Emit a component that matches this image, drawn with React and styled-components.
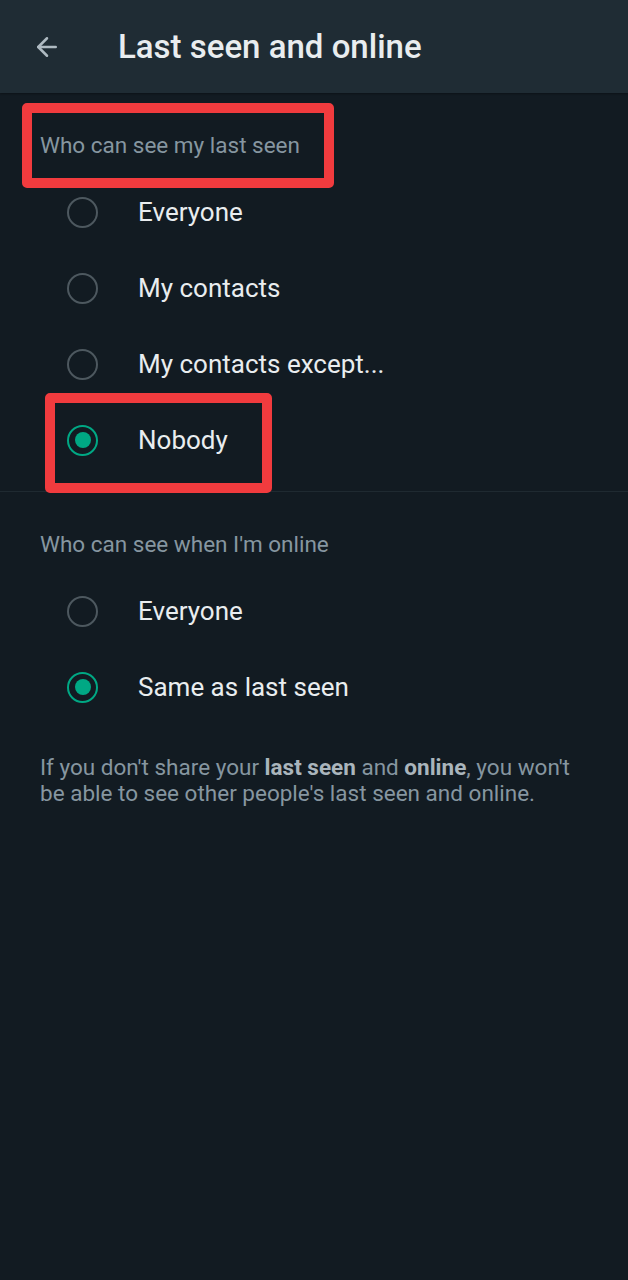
import React from 'react'
import styled, { createGlobalStyle } from 'styled-components'
import { ArrowLeft } from 'lucide-react'

const GlobalStyle = createGlobalStyle`
  html, body {
    margin: 0;
    padding: 0;
    background: #121b22;
  }
  * { box-sizing: border-box; }
`

const Page = styled.div`
  position: relative;
  width: 628px;
  min-height: 1280px;
  background: #121b22;
  font-family: Roboto, "Noto Sans", sans-serif;
  color: #e9edef;
`

const TopBar = styled.header`
  height: 93px;
  display: flex;
  align-items: center;
  padding-left: 32px;
  gap: 56px;
  background: #1f2c34;
  box-shadow: 0 1px 2px rgba(0, 0, 0, 0.35);

  h1 {
    margin: 0;
    font-size: 33px;
    font-weight: 500;
    color: #e9edef;
  }
`

const SectionLabel = styled.div`
  padding: 39px 40px 16px;
  font-size: 22.5px;
  line-height: 26px;
  color: #8696a0;
`

const Row = styled.div`
  height: 76px;
  display: flex;
  align-items: center;
  padding-left: 67px;
  gap: 40px;
  font-size: 26px;
  color: #e9edef;
`

const Radio = styled.span`
  width: 31px;
  height: 31px;
  border-radius: 50%;
  border: 2.5px solid ${p => (p.$on ? '#00a884' : '#4d585f')};
  display: flex;
  align-items: center;
  justify-content: center;

  &::after {
    content: '';
    width: 16px;
    height: 16px;
    border-radius: 50%;
    background: #00a884;
    display: ${p => (p.$on ? 'block' : 'none')};
  }
`

const Divider = styled.hr`
  margin: 13px 0 0;
  border: 0;
  border-top: 1px solid #1f2a31;
`

const Note = styled.p`
  margin: 0;
  padding: 29px 40px 0;
  font-size: 22.5px;
  line-height: 26px;
  color: #8696a0;

  b {
    font-weight: 700;
    color: #aab5bc;
  }
`

const Mark = styled.div`
  position: absolute;
  border: 10px solid #f13b3e;
  border-radius: 5px;
  pointer-events: none;
`

const Option = ({ label, on }) => (
  <Row>
    <Radio $on={on} />
    <span>{label}</span>
  </Row>
)

export default function App() {
  return (
    <Page>
      <GlobalStyle />
      <TopBar>
        <ArrowLeft size={30} color="#aebac1" strokeWidth={2} />
        <h1>Last seen and online</h1>
      </TopBar>

      <SectionLabel>Who can see my last seen</SectionLabel>
      <Option label="Everyone" />
      <Option label="My contacts" />
      <Option label="My contacts except..." />
      <Option label="Nobody" on />
      <Divider />

      <SectionLabel>Who can see when I'm online</SectionLabel>
      <Option label="Everyone" />
      <Option label="Same as last seen" on />

      <Note>
        If you don't share your <b>last seen</b> and <b>online</b>, you won't
        be able to see other people's last seen and online.
      </Note>

      {/* red annotation boxes drawn over the screenshot */}
      <Mark style={{ left: 22, top: 103, width: 312, height: 85 }} />
      <Mark style={{ left: 45, top: 393, width: 227, height: 100 }} />
    </Page>
  )
}
